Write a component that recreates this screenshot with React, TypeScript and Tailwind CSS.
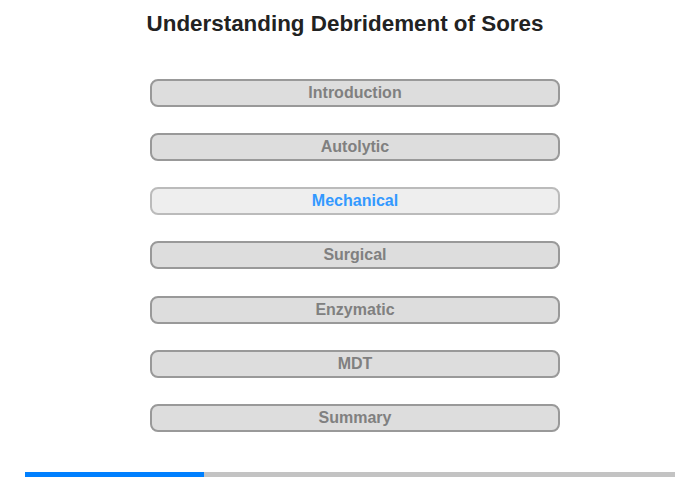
const sections = ['Introduction', 'Autolytic', 'Mechanical', 'Surgical', 'Enzymatic', 'MDT', 'Summary'];
const current = 'Mechanical';

export default function App() {
  return (
    <div className="w-[700px] h-[480px] bg-white font-['Liberation_Sans',Arial,sans-serif] relative">
      <h1 className="pt-[10px] pr-[10px] text-center text-[22.4px] leading-[28px] font-bold text-[#222]">
        Understanding Debridement of Sores
      </h1>

      <div className="mt-[41px] ml-[150px] w-[410px] flex flex-col gap-[26.17px]">
        {sections.map((s) => {
          const active = s === current;
          return (
            <button
              key={s}
              className={`h-[28px] rounded-[8px] border-2 text-[16px] font-bold leading-none ${
                active ? 'bg-[#eeeeee] border-[#bbbbbb] text-[#3399ff]' : 'bg-[#dddddd] border-[#999999] text-[#808080]'
              }`}
            >
              {s}
            </button>
          );
        })}
      </div>

      {/* progress */}
      <div className="absolute left-[25px] top-[472px] w-[650px] h-[5px] bg-[#c3c3c3]">
        <div className="h-full w-[179px] bg-[#0080ff]" />
      </div>
    </div>
  );
}
